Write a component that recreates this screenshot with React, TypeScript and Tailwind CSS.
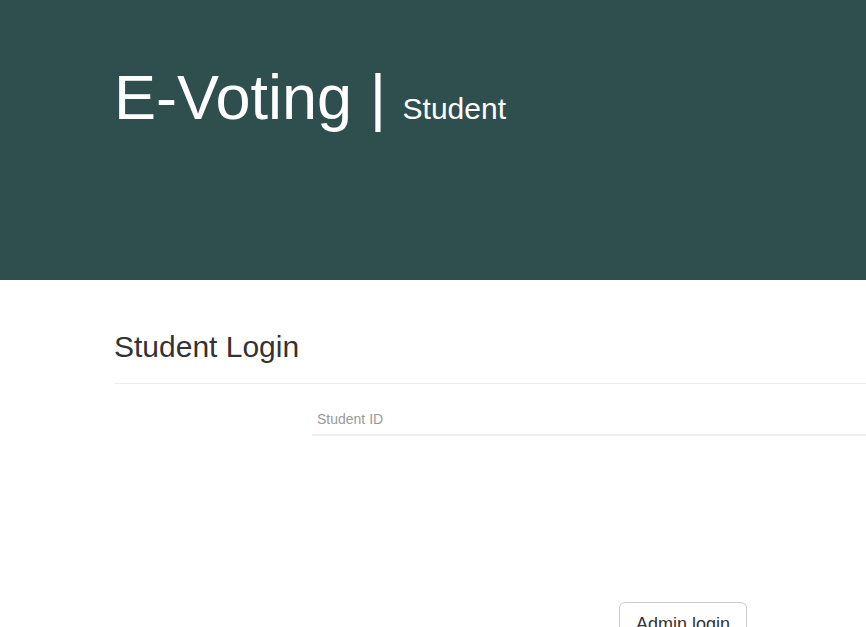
export default function App() {
  const font = { fontFamily: '"Liberation Sans", Arial, sans-serif' };
  return (
    <div className="min-h-[627px] w-full overflow-hidden bg-white" style={font}>
      <header className="h-[280px] bg-[#2f4f4f] pl-[114px] pt-[63px]">
        <h1 className="whitespace-nowrap text-[63px] leading-[1.1] font-normal text-white">
          E-Voting |{' '}
          <span className="-ml-[1px] text-[30px]">Student</span>
        </h1>
      </header>
      <main className="pl-[114px] pt-[50px]">
        <div className="w-[900px] border-b border-[#eeeeee] pb-[20px]">
          <h2 className="text-[30px] leading-[1.1] font-normal text-[#333333]">Student Login</h2>
        </div>
        <div className="ml-[198px] mt-[14px] w-[700px]">
          <input
            type="text"
            placeholder="Student ID"
            className="block h-[38px] w-full border-b-2 border-[#eeeeee] bg-transparent px-[5px] pt-[6px] text-[14px] text-[#333] placeholder:text-[#999999] outline-none"
          />
        </div>
        <div className="ml-[505px] mt-[166px]">
          <button className="rounded-[6px] border border-[#cccccc] bg-white px-[16px] py-[10px] text-[18px] leading-[1.33] text-[#333333]">
            Admin login
          </button>
        </div>
      </main>
    </div>
  );
}
